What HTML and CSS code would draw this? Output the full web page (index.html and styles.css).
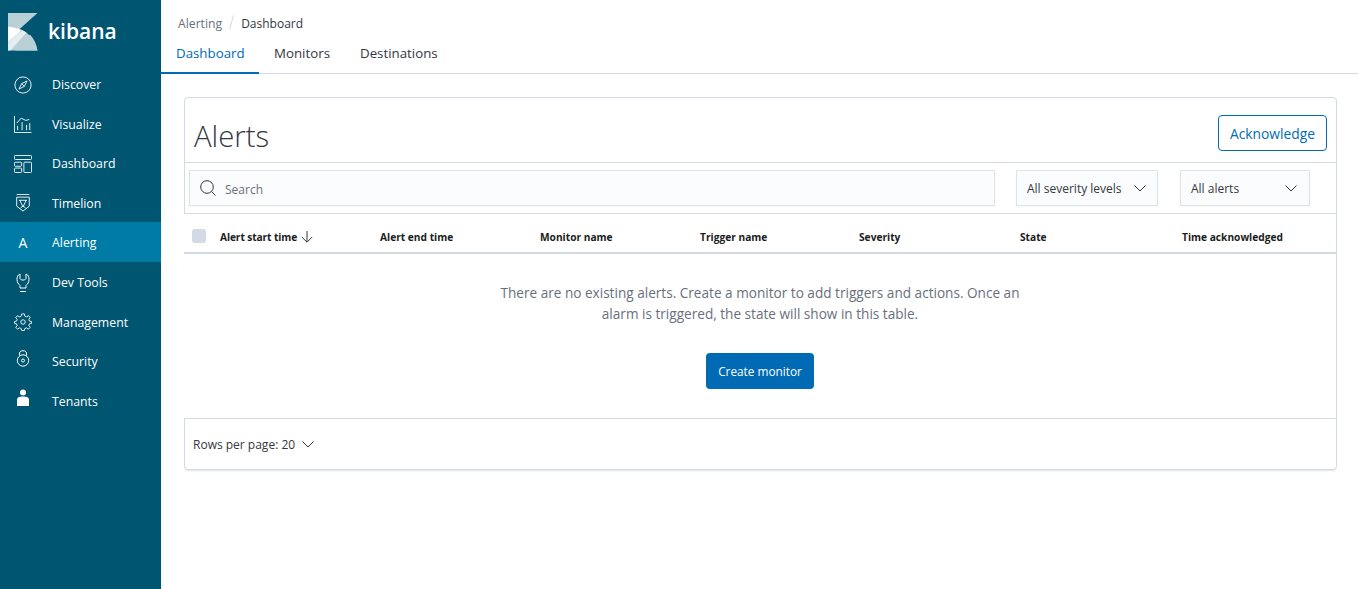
FILE: index.html
```html
<!DOCTYPE html>
<html lang="en">
<head>
<meta charset="utf-8">
<title>Alerting - Kibana</title>
<link rel="stylesheet" href="styles.css">
</head>
<body>
<div class="app">
  <nav class="side">
    <div class="brand">
      <svg class="logo" width="30" height="38" viewBox="0 0 30 38"><path d="M0 0H29.500L0 26.500Z" fill="#b9d0d6"/><path d="M0 13.500C5 14.500 11 15.500 14 17L0 30Z" fill="#fff"/><path d="M0 30L14 17C22 21 27 28 29.500 37.500H0Z" fill="#b9d0d6"/><path d="M7 37.500L22 21.500C26 26 28.500 31 29.500 37.500Z" fill="#b9d0d6"/><path d="M0 37.500V30L14 17L18.500 19.500L2.500 37.500Z" fill="#e4eef0"/></svg>
      <span class="brand-name">kibana</span>
    </div>
    <a class="nav"><span class="ico"><svg width="18" height="18" viewBox="0 0 20 20" fill="none" stroke="#fff"><circle cx="10" cy="10" r="9"/><path d="M14.500 5.500L11.500 11.500L5.500 14.500L8.500 8.500ZM8.500 8.500L11.500 11.500"/></svg></span>Discover</a>
    <a class="nav"><span class="ico"><svg width="18" height="18" viewBox="0 0 20 20" fill="none" stroke="#fff"><path d="M.5 1V19.500H19.500"/><path d="M3 9L8 3.500L13 6L17 5"/><path d="M4 17V12M9 17V8M14 17V11M17.500 17V9"/></svg></span>Visualize</a>
    <a class="nav"><span class="ico"><svg width="18" height="18" viewBox="0 0 20 20" fill="none" stroke="#fff"><rect x=".5" y=".5" width="19" height="4.500" rx="1"/><rect x=".5" y="8" width="8" height="4.500" rx="1"/><rect x=".5" y="14.500" width="8" height="5" rx="1"/><rect x="11" y="8" width="8.500" height="11.500" rx="1"/></svg></span>Dashboard</a>
    <a class="nav"><span class="ico"><svg width="18" height="18" viewBox="0 0 20 20" fill="none" stroke="#fff"><path d="M3 .5H17M3 3.500H17V13.500L10 19L3 13.500Z"/><path d="M6.500 7L10 14.500L13.500 7M5.500 7H14.500M7 16L10 13L13 16"/></svg></span>Timelion</a>
    <a class="nav nav-on"><span class="ico ico-a">A</span>Alerting</a>
    <a class="nav"><span class="ico"><svg width="20" height="20" viewBox="0 0 20 20" fill="none" stroke="#fff"><path d="M7 1C4.500 2 4 4 4 6.500C4 9.500 5.500 11 7 12.500V15H13V12.500C14.500 11 16 9.500 16 6.500C16 4 15.500 2 13 1V5.500L11.500 7H8.500L7 5.500Z"/><path d="M7 18.500H13"/></svg></span>Dev Tools</a>
    <a class="nav"><span class="ico"><svg width="18" height="18" viewBox="0 0 20 20" fill="none" stroke="#fff"><circle cx="10" cy="10" r="2.500"/><path d="M8.500 1H11.500L12 3.500L14 4.400L16.200 3L18 5.200L16.500 7.200L17.200 9L19.500 9.500V11.500L17.200 12L16.500 14L18 16L16 18L14 16.500L12 17.300L11.500 19.500H8.500L8 17.300L6 16.500L4 18L2 16L3.500 14L2.800 12L.500 11.500V9.500L2.800 9L3.500 7.200L2 5.200L3.800 3L6 4.400L8 3.500Z"/></svg></span>Management</a>
    <a class="nav"><span class="ico ico-up"><svg width="20" height="20" viewBox="0 0 20 20" fill="none" stroke="#fff"><circle cx="10" cy="11.500" r="5.700"/><circle cx="10" cy="11.500" r="1.500"/><path d="M6.500 6.500V4C6.500 1 13.500 1 13.500 4V6.500"/></svg></span>Security</a>
    <a class="nav"><span class="ico ico-up"><svg width="20" height="20" viewBox="0 0 20 20" fill="#fff"><circle cx="10" cy="4.500" r="3"/><path d="M4 18V12C4 9 6.500 8.500 10 8.500S16 9 16 12V18Z"/></svg></span>Tenants</a>
  </nav>
  <main class="main">
    <div class="crumbs"><span class="crumb-link">Alerting</span><span class="crumb-sep"></span><span class="crumb-now">Dashboard</span></div>
    <div class="tabs">
      <a class="tab tab-on">Dashboard</a>
      <a class="tab">Monitors</a>
      <a class="tab">Destinations</a>
    </div>
    <section class="card">
      <header class="card-head">
        <h1 class="title">Alerts</h1>
        <button class="btn-outline">Acknowledge</button>
      </header>
      <div class="filters">
        <div class="search">
          <svg width="16" height="16" viewBox="0 0 16 16" fill="none" stroke="#343741"><circle cx="7" cy="7" r="6.300"/><path d="M11.500 11.500L15.500 15.500"/></svg>
          <span>Search</span>
        </div>
        <div class="select sel-sev"><span>All severity levels</span><svg class="chev" width="12" height="7" viewBox="0 0 12 7" fill="none" stroke="#343741"><path d="M.5 .5L6 6L11.500 .5"/></svg></div>
        <div class="select sel-all"><span>All alerts</span><svg class="chev" width="12" height="7" viewBox="0 0 12 7" fill="none" stroke="#343741"><path d="M.5 .5L6 6L11.500 .5"/></svg></div>
      </div>
      <div class="thead">
        <span class="check"></span>
        <span class="th th1">Alert start time<svg width="12" height="12" viewBox="0 0 12 12" fill="none" stroke="#343741"><path d="M6 0V11M.8 6L6 11.200L11.200 6"/></svg></span>
        <span class="th">Alert end time</span>
        <span class="th">Monitor name</span>
        <span class="th">Trigger name</span>
        <span class="th">Severity</span>
        <span class="th">State</span>
        <span class="th">Time acknowledged</span>
      </div>
      <div class="empty">
        <p class="empty-text">There are no existing alerts. Create a monitor to add triggers and actions. Once an alarm is triggered, the state will show in this table.</p>
        <button class="btn-fill">Create monitor</button>
      </div>
      <footer class="foot"><span>Rows per page: 20</span><svg width="12" height="7" viewBox="0 0 12 7" fill="none" stroke="#343741"><path d="M.5 .5L6 6L11.500 .5"/></svg></footer>
    </section>
  </main>
</div>
</body>
</html>
```
FILE: styles.css
```css
* { box-sizing: border-box; }
html, body { margin: 0; height: 100%; }
body { font-family: "Open Sans", "Liberation Sans", sans-serif; color: #343741; background: #fff; overflow: hidden; }
.app { display: flex; height: 589px; }

.side { width: 161px; flex: none; background: #005571; color: #fff; }
.brand { height: 64px; padding: 13px 0 0 8px; display: flex; align-items: flex-start; }
.logo { flex: none; }
.brand-name { font-size: 21px; font-weight: 600; line-height: 37px; margin-left: 10px; }
.nav { display: flex; align-items: center; height: 39.6px; font-size: 12.300px; font-weight: 500; padding: 1.600px 0 0 13px; }
.nav-on { background: #007ba6; padding-top: 0; }
.ico { width: 20px; height: 20px; margin-right: 19px; display: flex; align-items: center; justify-content: center; flex: none; }
.ico-a { font-size: 14px; }
.ico-up { margin-bottom: 6px; }

.main { flex: 1; min-width: 0; }
.crumbs { display: flex; align-items: center; height: 46px; padding: 0 0 0 17px; font-size: 12.200px; }
.crumb-link { color: #69707d; }
.crumb-sep { width: 1px; height: 15px; background: #d3dae6; transform: rotate(15deg); margin: 0 9px 2px 9px; }
.crumb-now { color: #343741; font-size: 12px; font-weight: 500; }
.tabs { display: flex; height: 28px; border-bottom: 1px solid #d3dae6; font-size: 13.300px; }
.tab { height: 28px; padding: 0 15px; line-height: 15px; color: #343741; }
.tab-on { width: 98px; color: #006bb4; border-bottom: 2px solid #006bb4; }

.card { margin: 23px 0 0 23px; width: 1153px; height: 373px; border: 1px solid #d3dae6; border-radius: 4px; box-shadow: 0 2px 2px -1px rgba(152,162,179,.3); background: #fff; }
.card-head { height: 65px; display: flex; justify-content: space-between; align-items: flex-start; padding: 16px 9px 0 9px; border-bottom: 1px solid #d3dae6; }
.title { margin: 0; font-size: 29.300px; font-weight: 300; line-height: 45px; color: #343741; }
.btn-outline { width: 109px; height: 36px; margin-top: 1px; background: #fff; border: 1px solid #006bb4; border-radius: 4px; color: #006bb4; font: 400 13.800px "Open Sans", sans-serif; padding: 0; }
.filters { height: 51px; padding: 7px 0 0 4px; display: flex; align-items: flex-start; border-bottom: 1px solid #d3dae6; }
.search, .select { height: 36px; background: #fbfcfd; box-shadow: inset 0 0 0 1px rgba(0,0,0,.1), 0 1px 2px rgba(0,0,0,.04); display: flex; align-items: center; font-size: 12px; }
.search { width: 806px; padding: 2px 0 0 11px; color: #69707d; }
.search svg { margin-top: -2px; }
.search span { margin-left: 9px; }
.select { justify-content: space-between; padding: 0 12px 0 11px; color: #343741; }
.sel-sev { width: 142px; margin-left: 21px; }
.sel-all { width: 130px; margin-left: 22px; padding-right: 13px; }

.thead { height: 40px; margin-left: -1px; padding-top: 7px; background: #fff; display: grid; grid-template-columns: 36px 160px 160px 160px 159px 161px 162px 1fr; align-items: center; border-bottom: 2px solid #d3dae6; font-size: 10.200px; font-weight: 700; color: #1a1c21; }
.check { width: 14px; height: 14px; background: #d3dae6; border-radius: 3px; margin: 0 0 2px 8px; }
.th { display: flex; align-items: center; gap: 4px; white-space: pre; }
.th1 { letter-spacing: -.1px; }

.empty { height: 165px; margin-left: -1px; background: #fff; display: flex; flex-direction: column; align-items: center; border-bottom: 1px solid #d3dae6; }
.empty-text { margin: 28px 0 0; width: 530px; text-align: center; font-size: 13.600px; line-height: 21px; color: #69707d; }
.btn-fill { margin-top: 29px; width: 108px; height: 36px; background: #006bb4; border: 0; border-radius: 4px; color: #fff; font: 400 11.800px "Open Sans", sans-serif; padding: 0; }
.foot { height: 50px; display: flex; align-items: center; gap: 7px; padding-left: 8px; font-size: 12px; color: #343741; }
```
